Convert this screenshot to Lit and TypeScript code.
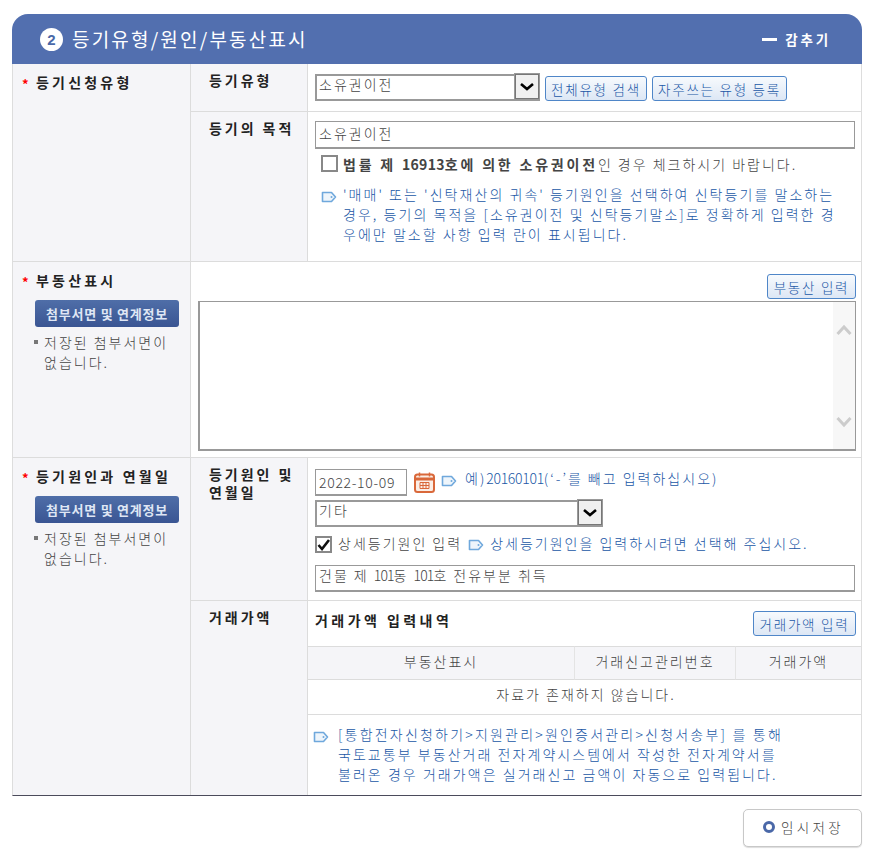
import { LitElement, html, css } from "lit";
import { customElement } from "lit/decorators.js";

const tag = () => html`<svg class="tag" width="16" height="12" viewBox="0 0 16 12"><path d="M1.500 1.500h9l4 4.500-4 4.500h-9z" fill="#eef5fb" stroke="#6fa8dc" stroke-width="1.600" stroke-linejoin="round"/><circle cx="10.500" cy="6" r="1" fill="#6fa8dc"/></svg>`;
const arrow = () => html`<span class="sel-btn"><svg width="16" height="10" viewBox="0 0 16 10"><path d="M2 2l6 5 6-5" fill="none" stroke="#000" stroke-width="2.600"/></svg></span>`;
const attach = () => html`<button class="dark">첨부서면 및 연계정보</button>
  <div class="saved"><i></i><span>저장된 첨부서면이<br>없습니다.</span></div>`;

@customElement("app-root")
export class AppRoot extends LitElement {
  static styles = css`
    :host { display: block; width: 876px; height: 858px; background: #fff; overflow: hidden;
      font-family: "Noto Sans CJK KR", "Liberation Sans", sans-serif; font-size: 14px; color: #444; letter-spacing: 2px; line-height: 20px; font-weight: 300; white-space: nowrap; }
    * { box-sizing: border-box; }
    .panel { width: 850px; margin: 14px 0 0 12px; }
    .head { height: 50px; background: #526faf; border-radius: 16px 16px 0 0; display: flex; align-items: center; padding: 0 31px 0 28px; color: #fff; }
    .num { width: 23px; height: 23px; border-radius: 50%; background: #fff; color: #4a68a8; font: 700 15px/23px "Liberation Sans", sans-serif; letter-spacing: 0; text-align: center; margin-right: 9px; }
    .title { font-size: 19px; letter-spacing: 2.2px; font-weight: 400; flex: 1; }
    .hide { display: flex; align-items: center; gap: 8px; font-weight: 700; font-size: 13.5px; letter-spacing: 2.8px; }
    .hide i { width: 15px; height: 3px; background: #fff; display: block; }
    .table { border-left: 1px solid #ddd; border-right: 1px solid #ddd; border-bottom: 1px solid #4b4b5b; }
    .row { display: grid; grid-template-columns: 178px 1fr; border-bottom: 1px solid #dcdcdc; }
    .row:last-child { border-bottom: 0; }
    .side { background: #f5f5f8; border-right: 1px solid #dcdcdc; padding: 8px 0 0 9px; }
    .th { color: #222; font-weight: 700; letter-spacing: 3.2px; display: flex; }
    .star { color: #f00; width: 14px; font-weight: 700; font-size: 13px; letter-spacing: 0; position: relative; top: 2px; }
    .dark { display: block; width: 144px; height: 27px; margin: 10px 0 0 13px; padding: 0; border: 0; border-radius: 3px; background: linear-gradient(#4f6ea8, #3a5593); color: #dfe6f4; font: 700 13px/27px "Noto Sans CJK KR", sans-serif; letter-spacing: 0.75px; }
    .saved { display: flex; margin: 5px 0 0 12px; }
    .saved i { width: 4px; height: 4px; background: #777; margin: 8px 6px 0 0; flex: none; }
    .sub { display: grid; grid-template-columns: 117px 1fr; }
    .sub + .sub { border-top: 1px solid #dcdcdc; }
    .sh { background: #f5f5f8; border-right: 1px solid #dcdcdc; padding: 7px 4px 0 18px; color: #222; font-weight: 700; letter-spacing: 2.950px; line-height: 18px; }
    .sc { padding: 0 6px 0 7px; min-width: 0; }
    .sel { height: 27px; border: 2px solid #999; border-width: 2px 1px 2px 2px; background: #fff; display: flex; justify-content: space-between; padding-left: 2px; line-height: 16px; }
    .sel-btn { width: 24px; height: 25px; margin-top: -2px; flex: none; border: 1px solid #777; background: #f0f0f0; display: flex; align-items: center; justify-content: center; outline: 1px solid #999; }
    .inp { height: 28px; border: 2px solid #999; border-width: 1px 1px 2px 1px; background: #fff; padding: 1px 3px; line-height: 20px; }
    .btn { height: 25px; border: 1px solid #4f86c8; border-radius: 3px; background: linear-gradient(#f7fafd, #dde7f5); color: #2157a6; padding: 0; text-align: center; font: 300 13.5px/22px "Noto Sans CJK KR", sans-serif; letter-spacing: 1.750px; flex: none; }
    .blue { color: #2157a6; }
    .r1 { display: flex; gap: 5px; align-items: flex-start; height: 47px; padding-top: 10px; }
    .r1 .sel { width: 225px; }
    .r1 .btn { margin-top: 2px; }
    .check { display: flex; align-items: center; gap: 5px; }
    .cb { width: 17px; height: 17px; border: 2px solid #888; background: #fff; flex: none; display: flex; align-items: center; justify-content: center; }
    b { font-weight: 700; letter-spacing: 2.800px; }
    b .dg { letter-spacing: 0.3px; }
    .dg { letter-spacing: -0.9px; }
    .note { display: grid; grid-template-columns: 22px 1fr; letter-spacing: 2.050px; }
    .note .tag { margin-top: 7px; }
    .wide { letter-spacing: 2.200px; }
    .tag { flex: none; }
    .purpose { height: 149px; padding-top: 9px; }
    .purpose .check { margin: 6px 0 0 6px; height: 17px; }
    .purpose .note { margin: 12px 0 0 6px; }
    .prop { height: 195px; padding: 12px 5px 0 7px; }
    .right { display: flex; justify-content: flex-end; }
    .ta { height: 150px; margin-top: 2px; border: 2px solid #999; border-width: 1px 1px 2px 2px; background: #fff; display: flex; justify-content: flex-end; }
    .bar { width: 22px; background: #f7f7f7; display: flex; flex-direction: column; align-items: center; justify-content: space-between; padding: 22px 0 21px; }
    .cause { height: 142px; padding-top: 11px; }
    .line { display: flex; align-items: center; height: 27px; }
    .line .tag { margin-bottom: 4px; }
    .date { width: 92px; height: 27px; border: 2px solid #999; border-width: 1px 1px 2px 1px; padding: 2px 3px; letter-spacing: 0.7px; line-height: 20px; flex: none; }
    .cal { margin: 0 6px 0 7px; flex: none; }
    .cause .sel { width: 288px; margin-top: 4px; }
    .cause .check { margin-top: 9px; height: 17px; gap: 6px; }
    .cause .check span:not(.cb) { margin-bottom: 4px; }
    .cause .inp { margin-top: 12px; width: 540px; height: 27px; padding-top: 0; line-height: 18px; }
    .ex { margin: 0 0 9px 8px; letter-spacing: 2px; }
    .ex .dg { letter-spacing: -0.3px; }
    .amount { height: 194px; padding: 0; }
    .at { height: 45px; display: flex; justify-content: space-between; padding: 10px 5px 0 7px; }
    .at b { color: #222; letter-spacing: 3.450px; line-height: 18px; }
    .grid { display: grid; grid-template-columns: 266px 161px 1fr; }
    .grid > div { height: 34px; text-align: center; line-height: 28px; }
    .gh { background: #f5f5f8; border-top: 1px solid #dcdcdc; border-bottom: 1px solid #dcdcdc; }
    .gh + .gh { border-left: 1px solid #e4e4e4; }
    .none { grid-column: 1 / -1; border-bottom: 1px solid #dcdcdc; height: 35px !important; padding-left: 3px; }
    .amount .note { padding: 9px 0 0 5px; grid-template-columns: 25px 1fr; }
    .foot { display: flex; justify-content: flex-end; margin-top: 13px; }
    .save { width: 119px; height: 38px; border: 1px solid #c8c8c8; border-radius: 5px; background: #fff; display: flex; align-items: center; justify-content: center; gap: 6px; font: 300 13.5px "Noto Sans CJK KR", sans-serif; letter-spacing: 3.300px; color: #444; padding: 0 0 2px 2px; box-shadow: 0 1px 1px #ddd; }
    .dot { width: 12px; height: 12px; border-radius: 50%; border: 3.500px solid #4a68a8; background: #fff; }
    .w102 { width: 102px; } .w135 { width: 135px; } .w89 { width: 89px; } .w103 { width: 103px; }
  `;
  render() {
    return html`<div class="panel">
      <div class="head"><span class="num">2</span><span class="title">등기유형/원인/부동산표시</span><span class="hide"><i></i>감추기</span></div>
      <div class="table">
        <div class="row">
          <div class="side"><div class="th"><span class="star">*</span>등기신청유형</div></div>
          <div>
            <div class="sub"><div class="sh">등기유형</div><div class="sc r1">
              <div class="sel">소유권이전${arrow()}</div>
              <button class="btn w102">전체유형 검색</button>
              <button class="btn w135">자주쓰는 유형 등록</button>
            </div></div>
            <div class="sub"><div class="sh">등기의 목적</div><div class="sc purpose">
              <div class="inp">소유권이전</div>
              <div class="check"><span class="cb"></span><span><b>법률 제 <span class="dg">16913</span>호에 의한 소유권이전</b>인 경우 체크하시기 바랍니다.</span></div>
              <div class="note blue">${tag()}<span>'매매' 또는 '신탁재산의 귀속' 등기원인을 선택하여 신탁등기를 말소하는<br>경우, 등기의 목적을 [소유권이전 및 신탁등기말소]로 정확하게 입력한 경<br>우에만 말소할 사항 입력 란이 표시됩니다.</span></div>
            </div></div>
          </div>
        </div>
        <div class="row">
          <div class="side"><div class="th"><span class="star">*</span>부동산표시</div>${attach()}</div>
          <div class="prop">
            <div class="right"><button class="btn w89">부동산 입력</button></div>
            <div class="ta"><div class="bar">
              <svg width="16" height="12" viewBox="0 0 16 12"><path d="M1.500 10l6.500-7 6.500 7" fill="none" stroke="#ccc" stroke-width="3"/></svg>
              <svg width="16" height="12" viewBox="0 0 16 12"><path d="M1.500 2l6.500 7 6.500-7" fill="none" stroke="#ccc" stroke-width="3"/></svg>
            </div></div>
          </div>
        </div>
        <div class="row">
          <div class="side"><div class="th"><span class="star">*</span>등기원인과 연월일</div>${attach()}</div>
          <div>
            <div class="sub"><div class="sh">등기원인 및<br>연월일</div><div class="sc cause">
              <div class="line"><div class="date">2022-10-09</div>
                <svg class="cal" width="21" height="21" viewBox="0 0 21 21"><rect x="1" y="2.500" width="19" height="17.500" rx="2.500" fill="#fbeee6" stroke="#d9683a" stroke-width="2"/><path d="M1 7h19" stroke="#d9683a" stroke-width="3"/><path d="M5.500 0.500v4M15.500 0.500v4" stroke="#d9683a" stroke-width="1.500"/><path d="M6 10.500h9v6h-9zM9 10.500v6M12 10.500v6M6 13.500h9" fill="none" stroke="#d9683a" stroke-width="1"/></svg>
                ${tag()}<span class="blue ex">예)<span class="dg">20160101</span>(‘-’를 빼고 입력하십시오)</span></div>
              <div class="sel">기타${arrow()}</div>
              <div class="check"><span class="cb"><svg width="13" height="12" viewBox="0 0 13 12"><path d="M1.500 6l3.500 4 7-9" fill="none" stroke="#111" stroke-width="2.600"/></svg></span><span>상세등기원인 입력</span>${tag()}<span class="blue">상세등기원인을 입력하시려면 선택해 주십시오.</span></div>
              <div class="inp">건물 제 <span class="dg">101</span>동 <span class="dg">101</span>호 전유부분 취득</div>
            </div></div>
            <div class="sub"><div class="sh">거래가액</div><div class="sc amount">
              <div class="at"><b>거래가액 입력내역</b><button class="btn w103">거래가액 입력</button></div>
              <div class="grid"><div class="gh">부동산표시</div><div class="gh">거래신고관리번호</div><div class="gh">거래가액</div><div class="none">자료가 존재하지 않습니다.</div></div>
              <div class="note blue">${tag()}<span><span class="wide">[통합전자신청하기>지원관리>원인증서관리>신청서송부] 를 통해</span><br>국토교통부 부동산거래 전자계약시스템에서 작성한 전자계약서를<br>불러온 경우 거래가액은 실거래신고 금액이 자동으로 입력됩니다.</span></div>
            </div></div>
          </div>
        </div>
      </div>
      <div class="foot"><button class="save"><span class="dot"></span>임시저장</button></div>
    </div>`;
  }
}
